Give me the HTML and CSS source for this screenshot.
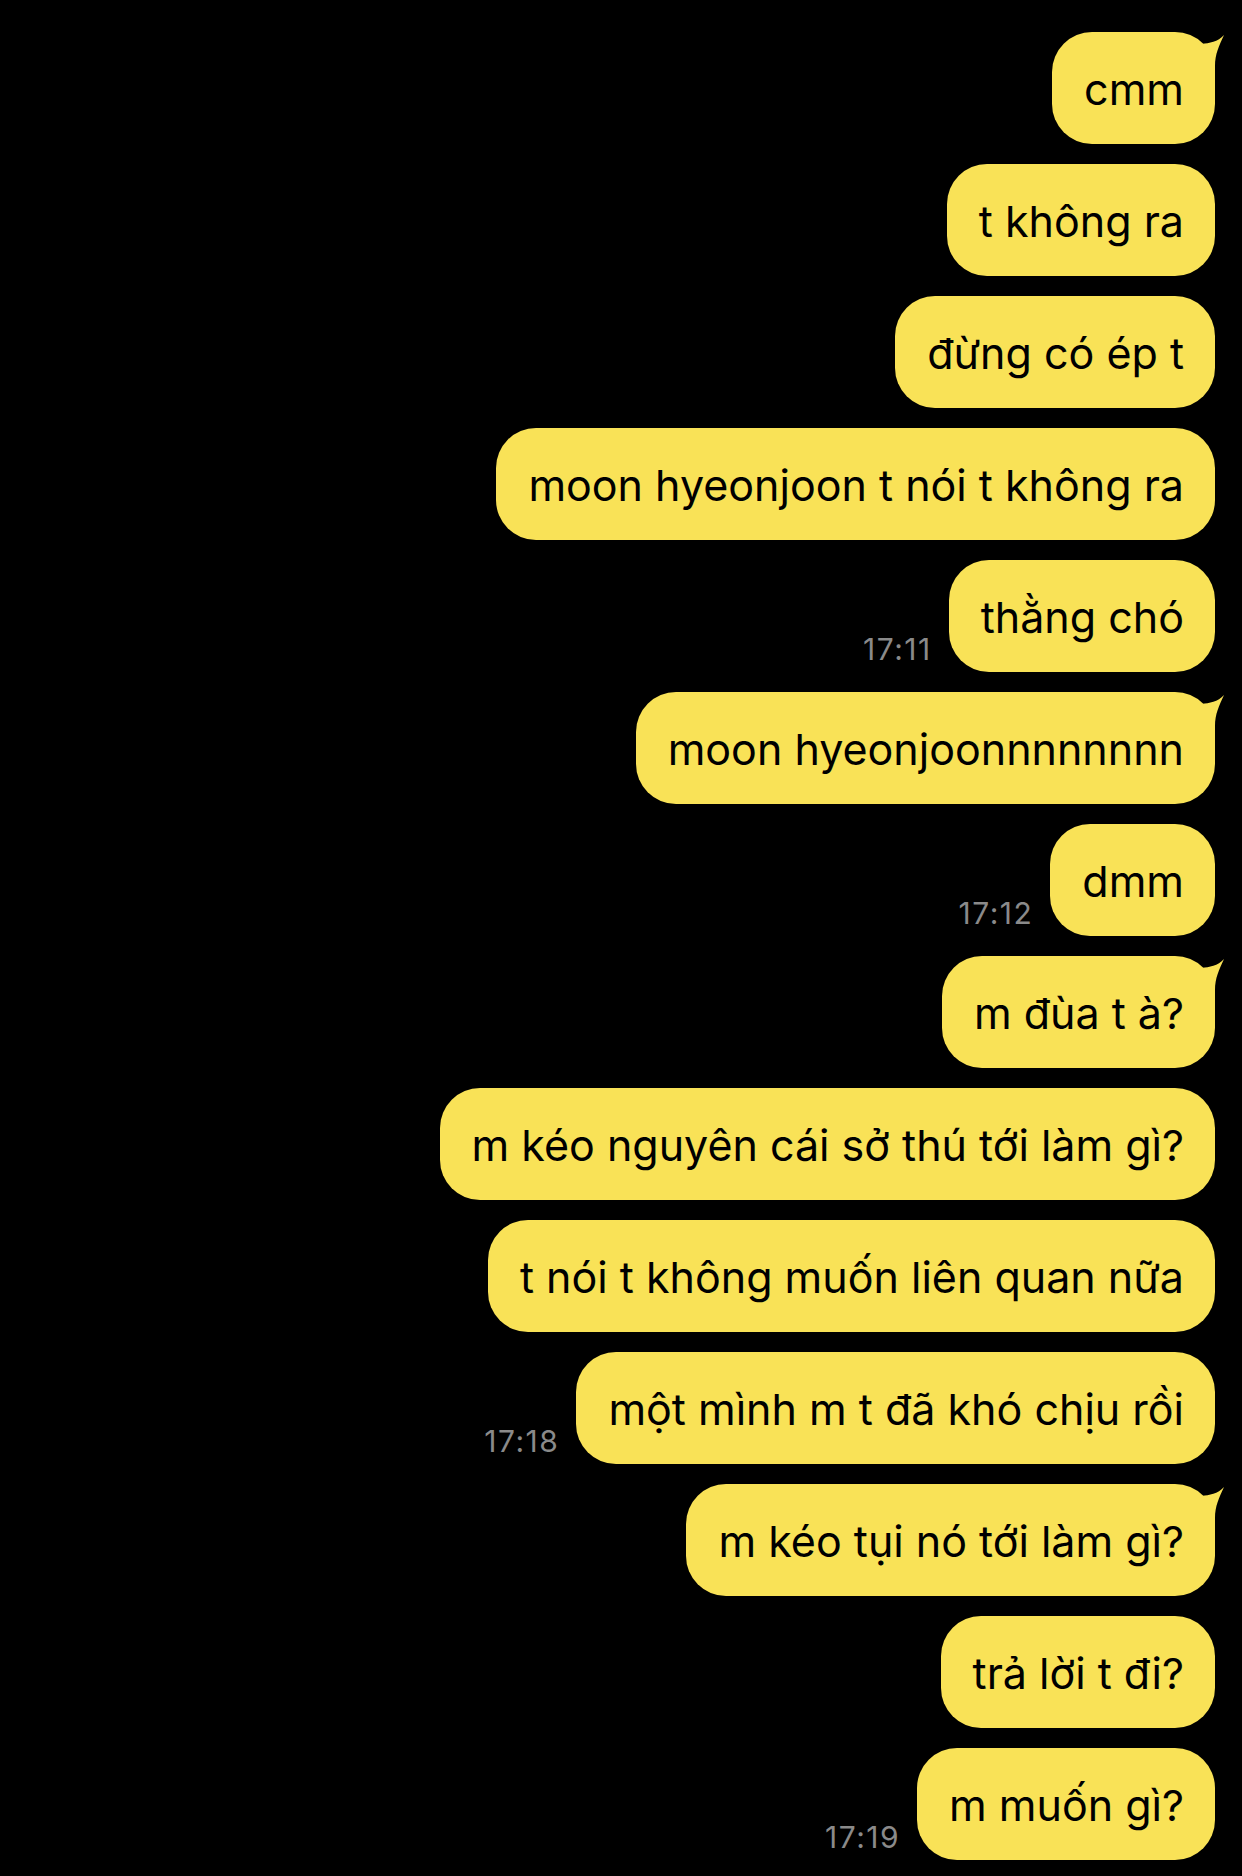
FILE: index.html
```html
<!DOCTYPE html>
<html lang="vi">
<head>
    <meta charset="UTF-8">
    <meta name="viewport" content="width=device-width, initial-scale=1.0">
    <title>Chat</title>
    <link rel="stylesheet" href="styles.css">
</head>
<body>
    <div class="chat">
        <div class="row">
            <div class="bubble tail">cmm
                <svg class="horn" viewBox="-20 0 30 46"><path d="M-13 12 C-6 11 3 10 9 3 C4 14 0 22 0 34 L0 46 L-20 46 L-20 20 Z"/></svg>
            </div>
        </div>
        <div class="row">
            <div class="bubble">t không ra</div>
        </div>
        <div class="row">
            <div class="bubble">đừng có ép t</div>
        </div>
        <div class="row">
            <div class="bubble">moon hyeonjoon t nói t không ra</div>
        </div>
        <div class="row">
            <span class="time">17:11</span>
            <div class="bubble">thằng chó</div>
        </div>
        <div class="row">
            <div class="bubble tail">moon hyeonjoonnnnnnnn
                <svg class="horn" viewBox="-20 0 30 46"><path d="M-13 12 C-6 11 3 10 9 3 C4 14 0 22 0 34 L0 46 L-20 46 L-20 20 Z"/></svg>
            </div>
        </div>
        <div class="row">
            <span class="time">17:12</span>
            <div class="bubble">dmm</div>
        </div>
        <div class="row">
            <div class="bubble tail">m đùa t à?
                <svg class="horn" viewBox="-20 0 30 46"><path d="M-13 12 C-6 11 3 10 9 3 C4 14 0 22 0 34 L0 46 L-20 46 L-20 20 Z"/></svg>
            </div>
        </div>
        <div class="row">
            <div class="bubble">m kéo nguyên cái sở thú tới làm gì?</div>
        </div>
        <div class="row">
            <div class="bubble">t nói t không muốn liên quan nữa</div>
        </div>
        <div class="row">
            <span class="time">17:18</span>
            <div class="bubble">một mình m t đã khó chịu rồi</div>
        </div>
        <div class="row">
            <div class="bubble tail">m kéo tụi nó tới làm gì?
                <svg class="horn" viewBox="-20 0 30 46"><path d="M-13 12 C-6 11 3 10 9 3 C4 14 0 22 0 34 L0 46 L-20 46 L-20 20 Z"/></svg>
            </div>
        </div>
        <div class="row">
            <div class="bubble">trả lời t đi?</div>
        </div>
        <div class="row">
            <span class="time">17:19</span>
            <div class="bubble">m muốn gì?</div>
        </div>
    </div>
</body>
</html>
```

FILE: styles.css
```css
html, body {
    margin: 0;
    padding: 0;
    background: #000;
}
body {
    width: 1242px;
    height: 1876px;
    overflow: hidden;
    font-family: Inter, "Noto Sans", sans-serif;
}
.chat {
    display: flex;
    flex-direction: column;
    align-items: flex-end;
    gap: 20px;
    padding: 32px 27px 0 0;
}
.row {
    display: flex;
    align-items: flex-end;
    gap: 17px;
}
.bubble {
    position: relative;
    background-color: #f9e257;
    color: #000;
    font-size: 43px;
    line-height: 52px;
    padding: 31px 31px 29px 32px;
    border-radius: 40px;
    white-space: nowrap;
}
.horn {
    position: absolute;
    top: 0;
    right: -10px;
    width: 30px;
    height: 46px;
    fill: #f9e257;
}
.time {
    color: #8a8a8a;
    font-size: 30px;
    letter-spacing: 1.5px;
    line-height: 1;
    padding-bottom: 8px;
}
```
